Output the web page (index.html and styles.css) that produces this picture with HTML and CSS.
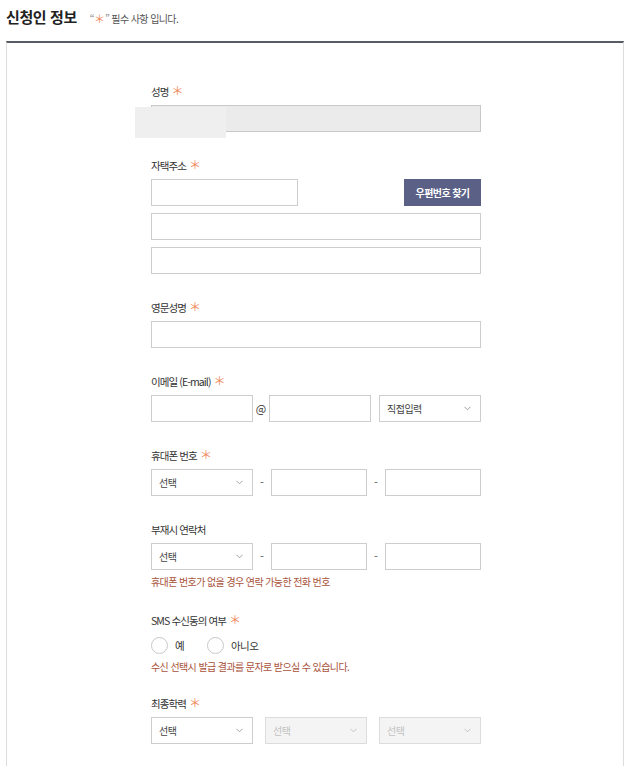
FILE: index.html
```html
<!DOCTYPE html>
<html lang="ko">
<head>
  <meta charset="UTF-8" />
  <meta name="viewport" content="width=device-width, initial-scale=1" />
  <title>신청인 정보</title>
  <link rel="stylesheet" href="styles.css">
</head>
<body>
  <div class="page">
    <div class="section-head">
      <h2>신청인 정보</h2>
      <p class="req-note"><span class="quote">“</span><span class="star">＊</span><span class="quote">”</span> 필수 사항 입니다.</p>
    </div>

    <div class="form-box">
      <form class="apply-form">
        <div class="field">
          <label class="field-label">성명 <span class="star">＊</span></label>
          <div class="masked">
            <input type="text" class="input readonly" readonly />
            <span class="mask"></span>
          </div>
        </div>

        <div class="field">
          <label class="field-label">자택주소 <span class="star">＊</span></label>
          <div class="addr-row">
            <input type="text" class="input zip" />
            <button type="button" class="btn-zip">우편번호 찾기</button>
          </div>
          <input type="text" class="input addr-line" />
          <input type="text" class="input addr-line" />
        </div>

        <div class="field">
          <label class="field-label">영문성명 <span class="star">＊</span></label>
          <input type="text" class="input" />
        </div>

        <div class="field">
          <label class="field-label">이메일 (E-mail) <span class="star">＊</span></label>
          <div class="email-row">
            <input type="text" class="input" />
            <span class="at">@</span>
            <input type="text" class="input" />
            <div class="select domain">
              <span>직접입력</span>
              <svg width="7" height="5" viewBox="0 0 7 5"><polyline points="0.5,0.8 3.5,3.8 6.5,0.8" fill="none" stroke="#a0a0a0" stroke-width="1"/></svg>
            </div>
          </div>
        </div>

        <div class="field">
          <label class="field-label">휴대폰 번호 <span class="star">＊</span></label>
          <div class="phone-row">
            <div class="select">
              <span>선택</span>
              <svg width="7" height="5" viewBox="0 0 7 5"><polyline points="0.5,0.8 3.5,3.8 6.5,0.8" fill="none" stroke="#a0a0a0" stroke-width="1"/></svg>
            </div>
            <span class="dash">-</span>
            <input type="text" class="input" />
            <span class="dash">-</span>
            <input type="text" class="input" />
          </div>
        </div>

        <div class="field has-hint">
          <label class="field-label">부재시 연락처</label>
          <div class="phone-row">
            <div class="select">
              <span>선택</span>
              <svg width="7" height="5" viewBox="0 0 7 5"><polyline points="0.5,0.8 3.5,3.8 6.5,0.8" fill="none" stroke="#a0a0a0" stroke-width="1"/></svg>
            </div>
            <span class="dash">-</span>
            <input type="text" class="input" />
            <span class="dash">-</span>
            <input type="text" class="input" />
          </div>
          <p class="hint">휴대폰 번호가 없을 경우 연락 가능한 전화 번호</p>
        </div>

        <div class="field has-hint sms">
          <label class="field-label">SMS 수신동의 여부 <span class="star">＊</span></label>
          <div class="radios">
            <label class="radio"><span class="circle"></span>예</label>
            <label class="radio"><span class="circle"></span>아니오</label>
          </div>
          <p class="hint">수신 선택시 발급 결과를 문자로 받으실 수 있습니다.</p>
        </div>

        <div class="field">
          <label class="field-label">최종학력 <span class="star">＊</span></label>
          <div class="edu-row">
            <div class="select">
              <span>선택</span>
              <svg width="7" height="5" viewBox="0 0 7 5"><polyline points="0.5,0.8 3.5,3.8 6.5,0.8" fill="none" stroke="#a0a0a0" stroke-width="1"/></svg>
            </div>
            <div class="select disabled">
              <span>선택</span>
              <svg width="7" height="5" viewBox="0 0 7 5"><polyline points="0.5,0.8 3.5,3.8 6.5,0.8" fill="none" stroke="#c4c4c4" stroke-width="1"/></svg>
            </div>
            <div class="select disabled">
              <span>선택</span>
              <svg width="7" height="5" viewBox="0 0 7 5"><polyline points="0.5,0.8 3.5,3.8 6.5,0.8" fill="none" stroke="#c4c4c4" stroke-width="1"/></svg>
            </div>
          </div>
        </div>
      </form>
    </div>
  </div>
</body>
</html>
```

FILE: styles.css
```css
* {
  box-sizing: border-box;
}

body {
  margin: 0;
  background: #fff;
  color: #333;
  font-family: "Noto Sans CJK KR", "Noto Sans", sans-serif;
}

.page {
  padding: 6px 4px 0 6px;
}

.section-head {
  display: flex;
  align-items: baseline;
  height: 35px;
}

.section-head h2 {
  margin: 0;
  font-size: 15px;
  line-height: 22px;
  font-weight: 700;
  color: #222;
  letter-spacing: -0.4px;
}

.req-note {
  margin: 0 0 0 13px;
  font-size: 10px;
  color: #555;
  letter-spacing: -0.6px;
}

.req-note .quote {
  color: #888;
}

.star {
  color: #ef8a5c;
  margin-left: 1px;
  font-size: 12px;
  line-height: 0;
  letter-spacing: 0;
}

.req-note .star {
  margin: 0;
  font-size: 11px;
}

.form-box {
  border-top: 2px solid #555c63;
  border-left: 1px solid #ddd;
  border-right: 1px solid #ddd;
  padding: 40px 0 40px;
  min-height: 760px;
}

.apply-form {
  width: 330px;
  margin-left: 144px;
}

.field {
  margin-bottom: 25px;
}

.field-label {
  display: block;
  height: 18px;
  font-size: 10.5px;
  line-height: 18px;
  margin-bottom: 4px;
  color: #333;
  letter-spacing: -0.9px;
}

.input {
  display: block;
  width: 100%;
  height: 27px;
  padding: 0 7px;
  border: 1px solid #cdcdcd;
  background: #fff;
  font: inherit;
  outline: none;
}

.input.readonly {
  background: #ebebeb;
  border-color: #c9c9c9;
}

.masked {
  position: relative;
}

.mask {
  position: absolute;
  left: -16px;
  top: 2px;
  width: 91px;
  height: 31px;
  background: #efefef;
}

.addr-row {
  display: flex;
  justify-content: space-between;
  margin-bottom: 7px;
}

.addr-row .zip {
  width: 147px;
}

.btn-zip {
  width: 77px;
  height: 27px;
  border: none;
  background: #5b6086;
  color: #fff;
  font-family: inherit;
  font-size: 10px;
  font-weight: 700;
  letter-spacing: -0.6px;
  padding: 0;
  cursor: pointer;
}

.addr-line + .addr-line {
  margin-top: 7px;
}

.email-row {
  display: grid;
  grid-template-columns: 102px 16px 102px 1fr;
}

.email-row .domain {
  margin-left: 8px;
}

.at {
  font-size: 11px;
  line-height: 27px;
  text-align: center;
  color: #333;
}

.phone-row {
  display: grid;
  grid-template-columns: 102px 18px 1fr 18px 1fr;
}

.dash {
  font-size: 11px;
  line-height: 27px;
  text-align: center;
  color: #555;
}

.edu-row {
  display: grid;
  grid-template-columns: repeat(3, 1fr);
  gap: 12px;
}

.select {
  display: flex;
  align-items: center;
  justify-content: space-between;
  height: 27px;
  padding: 0 9px 0 7px;
  border: 1px solid #cdcdcd;
  background: #fff;
  font-size: 10px;
  color: #444;
  letter-spacing: -0.5px;
}

.select.disabled {
  background: #f4f4f4;
  border-color: #dcdcdc;
  color: #c2c2c2;
}

.has-hint {
  margin-bottom: 22px;
}

.hint {
  margin: 4px 0 0;
  font-size: 10px;
  line-height: 16px;
  color: #a9523a;
  letter-spacing: -0.6px;
}

.sms {
  margin-bottom: 20px;
}

.sms .hint {
  margin-top: 3px;
}

.radios {
  display: flex;
  align-items: center;
  height: 22px;
  gap: 23px;
}

.radio {
  display: flex;
  align-items: center;
  gap: 7px;
  font-size: 10.5px;
  color: #333;
  letter-spacing: -0.6px;
}

.circle {
  width: 17px;
  height: 17px;
  border: 1.5px solid #c8c8c8;
  border-radius: 50%;
  background: #fff;
}
```
